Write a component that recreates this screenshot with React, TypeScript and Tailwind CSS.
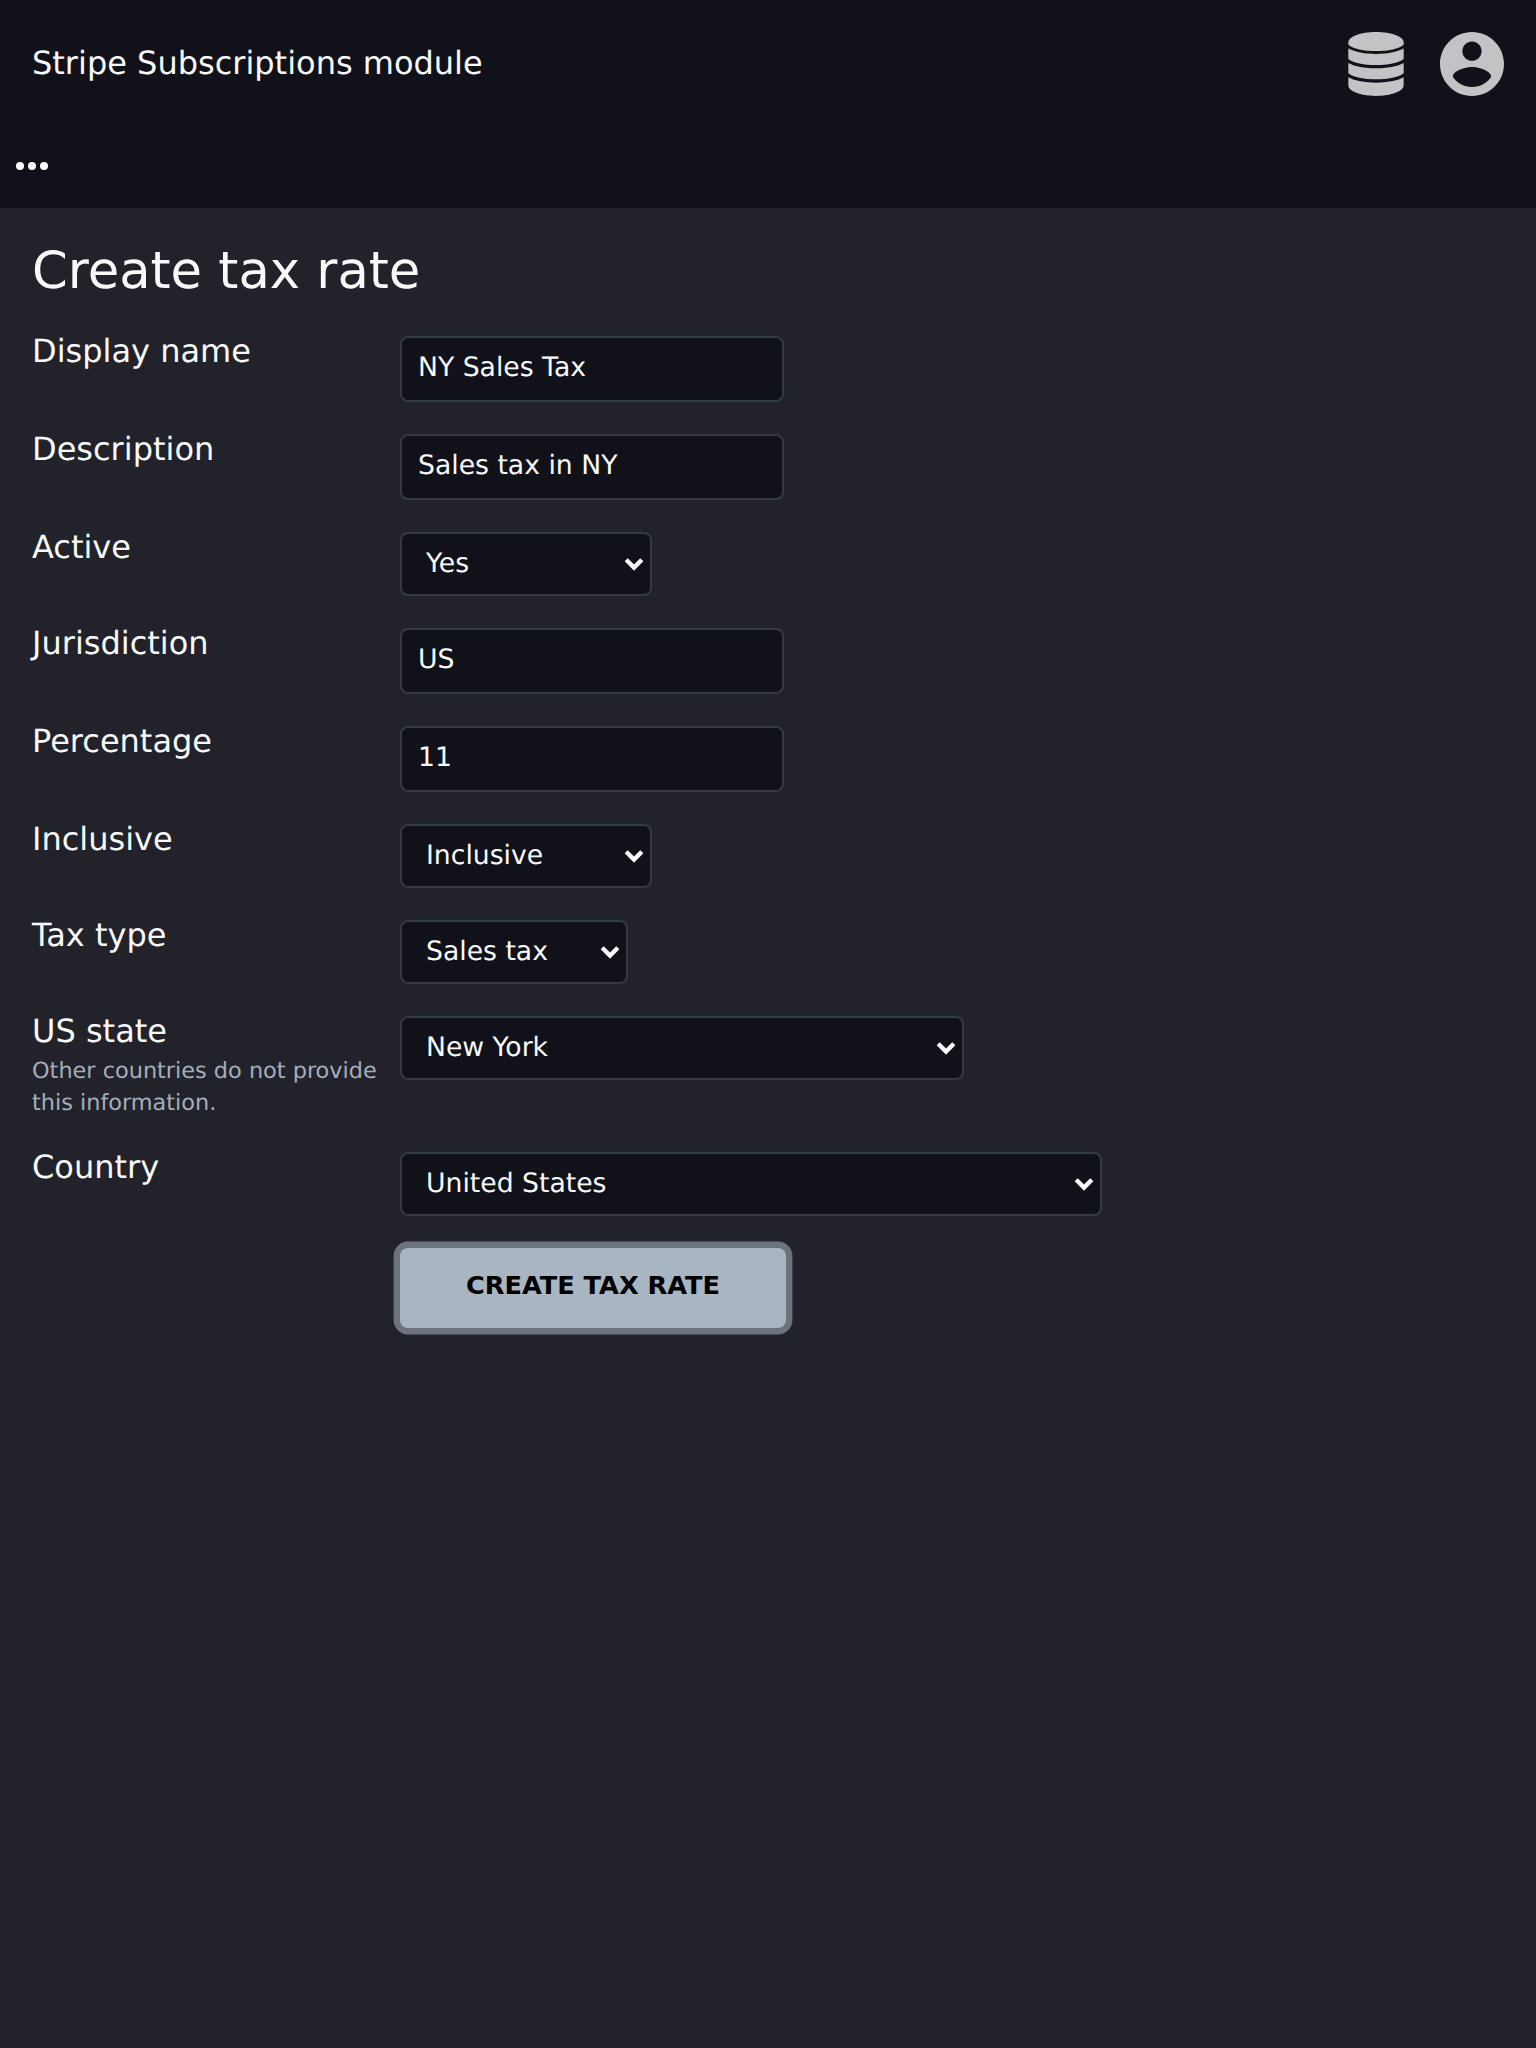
import type { ReactNode } from 'react'

function Chevron() {
  return (
    <svg className="h-[14px] w-5 shrink-0" viewBox="0 0 20 14" fill="none" stroke="#f8f9fa" strokeWidth="4.4">
      <path d="M2.2 2.8L10 10.6L17.8 2.8" />
    </svg>
  )
}

const field = 'flex rounded-lg border-2 border-[#323a42] bg-[#11111a] text-[26.67px]'

function Input({ value }: { value: string }) {
  return (
    <div className={`${field} h-[66px] w-96 pl-4`}>
      <span className="leading-[60px]">{value}</span>
    </div>
  )
}

function Select({ value, width }: { value: string; width: string }) {
  return (
    <div className={`${field} h-16 items-center justify-between pl-6 pr-1.5 ${width}`}>
      <span className="h-[60px] leading-[60px]">{value}</span>
      <Chevron />
    </div>
  )
}

function Row({ label, note, children }: { label: string; note?: string; children: ReactNode }) {
  return (
    <div className="flex items-start">
      <div className="w-[368px] shrink-0">
        <div className="h-[30px] text-[32px] leading-[30px]">{label}</div>
        {note && <div className="mt-[9px] h-[65px] text-[22.4px] leading-8 text-[#a2afb9]">{note}</div>}
      </div>
      {children}
    </div>
  )
}

export default function App() {
  return (
    <div className="h-[2048px] w-[1536px] overflow-hidden bg-[#22222b] font-['DejaVu_Sans',sans-serif] text-[#f8f9fa] [text-rendering:geometricPrecision]">
      <header className="h-52 bg-[#11111a]">
        <div className="flex h-32 items-center justify-between px-8">
          <div className="h-16 text-[32px] leading-[62px]">Stripe Subscriptions module</div>
          <div className="flex gap-9">
            <svg className="h-16 w-14" viewBox="0 0 168 192" fill="#c3c3c5">
              <path d="M1 31C1 14 38 0 84 0s83 14 83 31v7C153 50 121 57 84 57S15 50 1 38z" />
              <path d="M1 49c20 12 50 17 83 17s63-5 83-17v32c-16 12-48 18-83 18S17 93 1 81z" />
              <path d="M1 93c20 11 50 16 83 16s63-5 83-16v31c-16 12-48 18-83 18S17 136 1 124z" />
              <path d="M1 136c20 11 50 16 83 16s63-5 83-16v24c0 18-37 32-83 32S1 178 1 160z" />
            </svg>
            <svg className="size-16" viewBox="2 2 20 20" fill="#c3c3c5">
              <path d="M12 2C6.48 2 2 6.48 2 12s4.48 10 10 10 10-4.48 10-10S17.52 2 12 2zm0 3c1.66 0 3 1.34 3 3s-1.34 3-3 3-3-1.34-3-3 1.34-3 3-3zm0 14.2c-2.5 0-4.71-1.28-6-3.22.03-1.99 4-3.08 6-3.08 1.99 0 5.97 1.09 6 3.08-1.29 1.94-3.5 3.22-6 3.22z" />
            </svg>
          </div>
        </div>
        <div className="flex gap-1 px-4 pt-[34px]">
          <span className="size-2 rounded-full bg-white" />
          <span className="size-2 rounded-full bg-white" />
          <span className="size-2 rounded-full bg-white" />
        </div>
      </header>
      <main className="px-8 pt-8">
        <h1 className="h-24 text-[51.2px] leading-[62px]">Create tax rate</h1>
        <div className="flex flex-col gap-8">
          <Row label="Display name"><Input value="NY Sales Tax" /></Row>
          <Row label="Description"><Input value="Sales tax in NY" /></Row>
          <Row label="Active"><Select value="Yes" width="w-[252px]" /></Row>
          <Row label="Jurisdiction"><Input value="US" /></Row>
          <Row label="Percentage"><Input value="11" /></Row>
          <Row label="Inclusive"><Select value="Inclusive" width="w-[252px]" /></Row>
          <Row label="Tax type"><Select value="Sales tax" width="w-[228px]" /></Row>
          <Row label="US state" note="Other countries do not provide this information.">
            <Select value="New York" width="w-[564px]" />
          </Row>
          <Row label="Country"><Select value="United States" width="w-[702px]" /></Row>
        </div>
        <button className="ml-[368px] mt-8 block h-20 w-[386px] rounded-lg bg-[#a9b5c1] text-[25.6px] font-bold text-black shadow-[0_0_0_6.4px_#6b747d]">
          <span className="block h-20 leading-[74px]">CREATE TAX RATE</span>
        </button>
      </main>
    </div>
  )
}
